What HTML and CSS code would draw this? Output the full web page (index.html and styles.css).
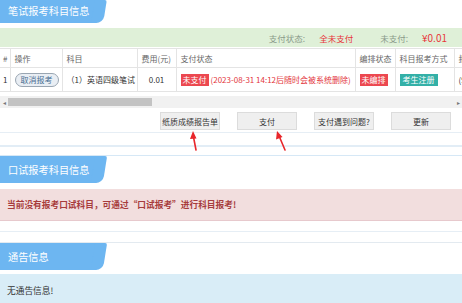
FILE: index.html
```html
<!DOCTYPE html>
<html lang="zh-CN">
<head>
    <meta charset="UTF-8">
    <meta name="viewport" content="width=device-width, initial-scale=1.0">
    <title>报考信息</title>
    <link rel="stylesheet" href="styles.css">
</head>
<body>
    <div class="tab tab-first">笔试报考科目信息</div>

    <div class="pay-bar">
        <span class="pay-label">支付状态:</span>
        <span class="pay-value">全未支付</span>
        <span class="pay-label">未支付:</span>
        <span class="pay-value">¥0.01</span>
    </div>

    <div class="table-wrap">
        <table class="grid">
            <colgroup>
                <col style="width:10px">
                <col style="width:52px">
                <col style="width:75px">
                <col style="width:39px">
                <col style="width:179px">
                <col style="width:40px">
                <col style="width:59px">
                <col style="width:60px">
            </colgroup>
            <thead>
                <tr>
                    <th>#</th>
                    <th>操作</th>
                    <th>科目</th>
                    <th>费用(元)</th>
                    <th>支付状态</th>
                    <th>编排状态</th>
                    <th>科目报考方式</th>
                    <th>报考时间</th>
                </tr>
            </thead>
            <tbody>
                <tr>
                    <td>1</td>
                    <td><span class="pill">取消报考</span></td>
                    <td class="subject">（1）英语四级笔试</td>
                    <td class="fee">0.01</td>
                    <td><span class="label label-red">未支付</span><span class="warn">(2023-08-31 14:12后随时会被系统删除)</span></td>
                    <td><span class="label label-red">未编排</span></td>
                    <td><span class="label label-teal">考生注册</span></td>
                    <td>(9</td>
                </tr>
            </tbody>
        </table>
    </div>

    <div class="scrollbar">
        <span class="arrow">&#9666;</span>
        <div class="thumb"></div>
        <span class="arrow arrow-right">&#9656;</span>
    </div>

    <div class="actions">
        <button class="btn">纸质成绩报告单</button>
        <button class="btn">支付</button>
        <button class="btn">支付遇到问题?</button>
        <button class="btn">更新</button>
    </div>

    <div class="rule rule-a"></div>
    <div class="rule rule-b"></div>
    <div class="rule rule-c"></div>

    <div class="tab">口试报考科目信息</div>
    <div class="alert alert-danger">当前没有报考口试科目，可通过“口试报考”进行科目报考!</div>

    <div class="rule rule-d"></div>
    <div class="rule rule-e"></div>

    <div class="tab">通告信息</div>
    <div class="alert alert-info">无通告信息!</div>

    <svg class="marks" width="462" height="303" viewBox="0 0 462 303">
        <g stroke="#e8262b" stroke-width="1.6" fill="#e8262b" stroke-linecap="round">
            <line x1="196" y1="150" x2="193.5" y2="137"/>
            <polygon points="193,131 190,139 196.5,138.5" stroke="none"/>
            <line x1="285" y1="150" x2="279.5" y2="137"/>
            <polygon points="277,131 276,139.5 282.5,137" stroke="none"/>
        </g>
    </svg>
</body>
</html>
```

FILE: styles.css
```css
body {
    margin: 0;
    font-family: "Noto Sans CJK SC", "Liberation Sans", sans-serif;
    font-size: 8px;
    color: #333;
    background: #fff;
    position: relative;
    overflow: hidden;
    height: 303px;
}
.tab {
    position: relative;
    width: 100px;
    height: 27px;
    line-height: 27px;
    padding-left: 8px;
    box-sizing: border-box;
    background: #6db6f1;
    color: #fff;
    font-size: 10.2px;
    border-radius: 0 0 6px 0;
}
.tab::after {
    content: "";
    position: absolute;
    top: 0;
    right: -5px;
    width: 12px;
    height: 100%;
    background: #6db6f1;
    transform: skewX(-9deg);
    border-radius: 0 2px 7px 0;
}
.tab-first {
    height: 23px;
    line-height: 22px;
}
.pay-bar {
    margin-top: 5px;
    height: 19px;
    background: #dff0d8;
    display: flex;
    align-items: center;
    justify-content: flex-end;
    padding-right: 15px;
    font-size: 8.5px;
}
.pay-label {
    color: #8a9a8a;
    margin-right: 14px;
}
.pay-value {
    color: #e8353a;
    margin-right: 27px;
}
.pay-value:last-child {
    margin-right: 0;
    font-size: 10px;
}
.table-wrap {
    width: 462px;
    overflow: hidden;
    margin-top: 1px;
}
.grid {
    table-layout: fixed;
    width: 514px;
    border-collapse: collapse;
}
.grid th,
.grid td {
    border: 1px solid #e4e4e4;
    padding: 0 0 0 4px;
    text-align: left;
    white-space: nowrap;
    overflow: hidden;
    font-weight: normal;
}
.grid th {
    height: 18px;
    color: #666;
}
.grid td {
    height: 23px;
}
.grid tr > :first-child {
    padding-left: 3px;
    border-left: none;
}
.grid .subject {
    padding-left: 4px;
}
.grid .fee {
    text-align: center;
    padding-left: 0;
}
.pill {
    display: inline-block;
    padding: 0 5px;
    height: 12px;
    line-height: 12px;
    border: 1px solid #9aa6b2;
    border-radius: 7px;
    background: #e9eef4;
    color: #4a6f93;
}
.label {
    display: inline-block;
    height: 12px;
    line-height: 12px;
    padding: 0 2px;
    color: #fff;
}
.label-red {
    background: #ec4850;
}
.label-teal {
    background: #33b0a7;
    padding: 0 3px;
}
.warn {
    color: #e3353b;
    margin-left: 2px;
}
.scrollbar {
    margin-top: 4px;
    height: 12px;
    background: #f1f1f1;
    display: flex;
    align-items: center;
    position: relative;
}
.arrow {
    color: #777;
    font-size: 6px;
    width: 8px;
    text-align: center;
}
.arrow-right {
    margin-left: auto;
}
.thumb {
    width: 144px;
    height: 8px;
    background: #c3c3c3;
}
.actions {
    display: flex;
    justify-content: flex-end;
    gap: 17px;
    padding: 4px 11px 0 0;
}
.btn {
    width: 60px;
    height: 18px;
    padding: 0;
    white-space: nowrap;
    font-family: inherit;
    font-size: 8px;
    color: #333;
    background: #efefef;
    border: 1px solid #dcdcdc;
}
.rule {
    border-top: 1px solid #e6eef5;
}
.rule-a {
    margin-top: 2px;
}
.rule-b {
    margin-top: 12px;
    border-top: 2px solid #e2edf6;
}
.rule-c {
    margin-top: 8px;
    border-top-color: #d6e8f6;
}
.alert {
    padding: 0 7px;
    display: flex;
    align-items: center;
}
.alert-danger {
    margin-top: 6px;
    height: 31px;
    background: #f2dede;
    border-bottom: 1px solid #e7c9cd;
    color: #a73c3c;
    font-size: 8.7px;
    font-weight: bold;
}
.rule-d {
    margin-top: 10px;
}
.rule-e {
    margin-top: 10px;
    border-top-color: #e3eaf0;
}
.alert-info {
    margin-top: 4px;
    height: 32px;
    background: #d9edf7;
    color: #333;
    font-size: 8.7px;
}
.marks {
    position: absolute;
    top: 0;
    left: 0;
    pointer-events: none;
}
```
